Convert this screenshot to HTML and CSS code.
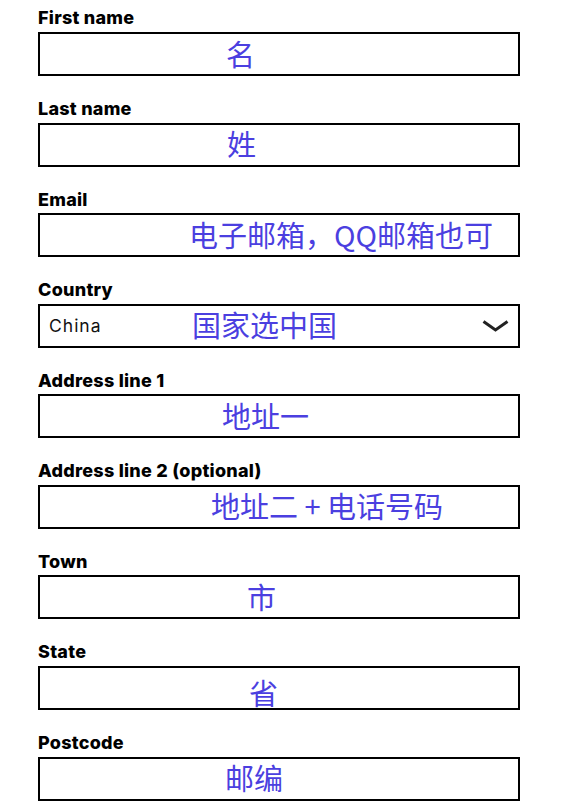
FILE: index.html
```html
<!DOCTYPE html>
<html lang="en">
<head>
<meta charset="utf-8">
<title>Address form</title>
<link rel="stylesheet" href="styles.css">
</head>
<body>
<form class="form">
  <div class="field">
    <label class="label">First name</label>
    <div class="box"><span class="note note-first">名</span></div>
  </div>
  <div class="field">
    <label class="label">Last name</label>
    <div class="box"><span class="note note-last">姓</span></div>
  </div>
  <div class="field">
    <label class="label">Email</label>
    <div class="box"><span class="note note-email">电子邮箱，QQ邮箱也可</span></div>
  </div>
  <div class="field">
    <label class="label">Country</label>
    <div class="box select">
      <span class="value">China</span>
      <svg class="chevron" width="27" height="12" viewBox="0 0 27 12"><polyline points="1.5,1.5 13.5,10 25.5,1.5" fill="none" stroke="#222" stroke-width="3" stroke-linejoin="miter"/></svg>
      <span class="note note-country">国家选中国</span>
    </div>
  </div>
  <div class="field">
    <label class="label">Address line 1</label>
    <div class="box"><span class="note note-addr1">地址一</span></div>
  </div>
  <div class="field">
    <label class="label">Address line 2 (optional)</label>
    <div class="box"><span class="note note-addr2">地址二 + 电话号码</span></div>
  </div>
  <div class="field">
    <label class="label">Town</label>
    <div class="box"><span class="note note-town">市</span></div>
  </div>
  <div class="field">
    <label class="label">State</label>
    <div class="box"><span class="note note-state">省</span></div>
  </div>
  <div class="field">
    <label class="label">Postcode</label>
    <div class="box"><span class="note note-post">邮编</span></div>
  </div>
</form>
</body>
</html>
```

FILE: styles.css
```css
html, body {
  margin: 0;
  padding: 0;
  background: #fff;
}

.form {
  display: flex;
  flex-direction: column;
  gap: 21.71px;
  width: 482px;
  margin-left: 38px;
  padding-top: 7.46px;
}

.field {
  display: flex;
  flex-direction: column;
}

.label {
  display: block;
  font-family: Inter, "Noto Sans", sans-serif;
  font-weight: 800;
  font-size: 18px;
  line-height: 22px;
  letter-spacing: 0.25px;
  color: #000;
  margin-bottom: 2.84px;
}

.box {
  position: relative;
  box-sizing: border-box;
  height: 44px;
  border: 2px solid #000;
  background: #fff;
}

.select {
  display: flex;
  align-items: center;
  justify-content: space-between;
  padding: 0 9px;
}

.value {
  font-family: Inter, "Noto Sans", sans-serif;
  font-size: 17.5px;
  letter-spacing: 1px;
  color: #111;
}

.chevron {
  display: block;
}

.note {
  position: absolute;
  top: calc(50% - 1.5px);
  transform: translateY(-50%);
  font-family: "Noto Sans CJK SC", sans-serif;
  font-size: 29px;
  line-height: 29px;
  color: #4b3fe0;
  white-space: nowrap;
}

.note-first { left: 186px; }
.note-last { left: 187px; }
.note-email { left: 149px; }
.note-country { left: 152px; }
.note-addr1 { left: 182px; }
.note-addr2 { left: 171px; }
.note-town { left: 207px; }
.note-state { left: 209px; transform: translateY(-30%); }
.note-post { left: 185px; }
```
